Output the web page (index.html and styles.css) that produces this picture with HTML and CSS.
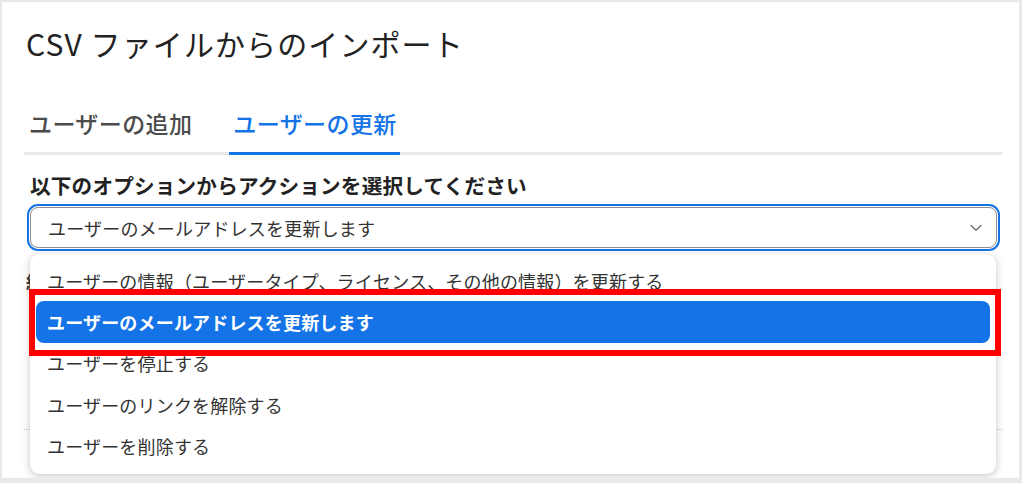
FILE: index.html
```html
<!DOCTYPE html>
<html lang="ja">
<head>
<meta charset="utf-8">
<title>CSV ファイルからのインポート</title>
<link rel="stylesheet" href="styles.css">
</head>
<body>
<div class="card">
  <h1 class="title">CSV ファイルからのインポート</h1>
  <div class="tabs">
    <div class="tab">ユーザーの追加</div>
    <div class="tab active">ユーザーの更新</div>
  </div>
  <div class="field">
    <div class="label">以下のオプションからアクションを選択してください</div>
    <div class="select-wrap">
      <div class="select">
        <span class="select-value">ユーザーのメールアドレスを更新します</span>
        <svg class="chevron" width="12" height="8" viewBox="0 0 12 8"><polyline points="1,1.5 6,6.2 11,1.5" fill="none" stroke="#6e6e6e" stroke-width="1.4" stroke-linecap="round" stroke-linejoin="round"/></svg>
      </div>
      <div class="menu">
        <div class="item">ユーザーの情報（ユーザータイプ、ライセンス、その他の情報）を更新する</div>
        <div class="item selected">ユーザーのメールアドレスを更新します</div>
        <div class="item">ユーザーを停止する</div>
        <div class="item">ユーザーのリンクを解除する</div>
        <div class="item">ユーザーを削除する</div>
        <div class="annot"></div>
      </div>
    </div>
  </div>
  <div class="hidden-label">組織内のユーザーに通知メールを送信する</div>
  <div class="divider"></div>
</div>
</body>
</html>
```

FILE: styles.css
```css
* { box-sizing: border-box; }
html, body { margin: 0; padding: 0; }
body {
  background: #e9e9e9;
  font-family: "Noto Sans CJK JP", "Noto Sans", sans-serif;
  color: #2c2c2c;
}
.card {
  margin: 2px 3px 0 2px;
  height: 476px;
  background: #fff;
  padding: 19px 17px 0 22px;
  overflow: hidden;
}
.title {
  margin: 0 0 0 2px;
  font-size: 30px;
  font-weight: 400;
  line-height: 44px;
  letter-spacing: 1.1px;
  color: #222;
}
.tabs {
  margin-top: 42px;
  display: flex;
  gap: 33px;
  border-bottom: 3px solid #e6e8ec;
}
.tab {
  font-size: 23px;
  font-weight: 500;
  line-height: 32px;
  letter-spacing: 0.4px;
  color: #4b4b4b;
  padding: 0 4px 13px 5px;
  margin-bottom: -3px;
  border-bottom: 3px solid transparent;
}
.tab.active {
  color: #1473e6;
  border-bottom-color: #1473e6;
  padding: 0 3px 13px 4px;
}
.field {
  margin-top: 16px;
}
.label {
  margin-left: 6px;
  font-size: 20.6px;
  font-weight: 700;
  line-height: 28px;
  letter-spacing: 0.2px;
  color: #222;
}
.select-wrap {
  position: relative;
  margin: 8px 5px 0 6px;
}
.select {
  height: 41px;
  border: 1.5px solid #8f8f8f;
  border-radius: 8px;
  outline: 2px solid #1473e6;
  outline-offset: 1px;
  display: flex;
  align-items: center;
  justify-content: space-between;
  padding: 0 14px 0 17px;
}
.select-value {
  font-size: 18px;
  color: #333;
  line-height: 24px;
  letter-spacing: 0.2px;
}
.menu {
  position: absolute;
  top: 47px;
  left: 0;
  width: 966px;
  background: #fff;
  border-radius: 9px;
  box-shadow: 0 2px 8px rgba(0, 0, 0, 0.22), 0 0 1px rgba(0, 0, 0, 0.15);
  padding: 6px 6px 7px;
  z-index: 5;
}
.item {
  height: 41.4px;
  display: flex;
  align-items: center;
  padding-left: 11px;
  font-size: 18px;
  letter-spacing: 0.18px;
  color: #333;
  border-radius: 8px;
}
.item.selected {
  background: #1473e6;
  color: #fff;
  font-weight: 700;
}
.annot {
  position: absolute;
  left: -1px;
  top: 35px;
  width: 972px;
  height: 67px;
  border: 6px solid #ff0000;
}
.hidden-label {
  margin: 22px 0 0 2px;
  font-size: 18px;
  font-weight: 700;
  line-height: 24px;
  color: #333;
}
.divider {
  margin-top: 135px;
  height: 1px;
  background: #e0e0e0;
}
```
